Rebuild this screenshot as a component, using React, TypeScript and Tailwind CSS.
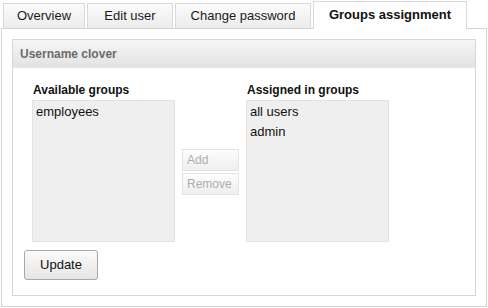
import React from "react";

const tabs = [
  { label: "Overview", w: "w-[82px]" },
  { label: "Edit user", w: "w-[86px]" },
  { label: "Change password", w: "w-[136px]" },
];

export default function App() {
  return (
    <div
      className="w-[488px] h-[308px] bg-white text-[#111]"
      style={{ fontFamily: '"Liberation Sans", Arial, sans-serif' }}
    >
      <div className="flex items-end h-[28px] pl-[3px] gap-[2px]">
        {tabs.map((t) => (
          <div
            key={t.label}
            className={`${t.w} h-[26px] mb-[-1px] border border-[#d9d9d9] border-b-[#d3d3d3] bg-gradient-to-b from-[#fbfbfb] to-[#ececec] flex items-center justify-center text-[13px] text-[#1a1a1a] pb-[1px]`}
          >
            {t.label}
          </div>
        ))}
        <div className="relative z-10 w-[154px] h-[28px] mb-[-1px] border border-b-0 border-[#d9d9d9] bg-white flex items-center justify-center text-[13px] font-bold text-[#111] pb-[1px]">
          Groups assignment
        </div>
      </div>
      <div className="ml-[1px] w-[486px] h-[279px] border border-[#d3d3d3] pt-[10px] pl-[10px]">
        <div className="w-[464px] h-[257px] border border-[#d5d5d5] flex flex-col">
          <div className="h-[28px] bg-gradient-to-b from-[#f6f6f6] to-[#e2e2e2] flex items-center pl-[7px] text-[12px] font-bold text-[#6b6b6b]">
            Username clover
          </div>
          <div className="pl-[11px] pt-[14px]">
            <div className="flex items-center ml-[8px]">
              <div className="flex flex-col">
                <div className="text-[12px] font-bold leading-[16px] mb-[2px] ml-[1px] text-[#111]">
                  Available groups
                </div>
                <div className="w-[143px] h-[142px] bg-[#efefef] border border-[#e2e2e2] px-[3px] pt-[1px] text-[13px] leading-[20px] text-[#111]">
                  <div>employees</div>
                </div>
              </div>
              <div className="flex flex-col gap-[2px] mx-[7px] mt-[20px]">
                <div className="w-[57px] h-[22px] border border-[#e3e3e3] bg-gradient-to-b from-[#fdfdfd] to-[#efefef] text-[12px] text-[#adadad] flex items-center pl-[4px]">
                  Add
                </div>
                <div className="w-[57px] h-[22px] border border-[#e3e3e3] bg-gradient-to-b from-[#fdfdfd] to-[#efefef] text-[12px] text-[#adadad] flex items-center pl-[4px]">
                  Remove
                </div>
              </div>
              <div className="flex flex-col">
                <div className="text-[12px] font-bold leading-[16px] mb-[2px] ml-[1px] text-[#111]">
                  Assigned in groups
                </div>
                <div className="w-[143px] h-[142px] bg-[#efefef] border border-[#e2e2e2] px-[3px] pt-[1px] text-[13px] leading-[20px] text-[#111]">
                  <div>all users</div>
                  <div>admin</div>
                </div>
              </div>
            </div>
            <button className="mt-[8px] w-[74px] h-[30px] rounded-[3px] border border-[#a9a9a9] bg-gradient-to-b from-[#fafafa] to-[#e6e6e6] text-[13px] text-[#111] flex items-center justify-center">
              Update
            </button>
          </div>
        </div>
      </div>
    </div>
  );
}
